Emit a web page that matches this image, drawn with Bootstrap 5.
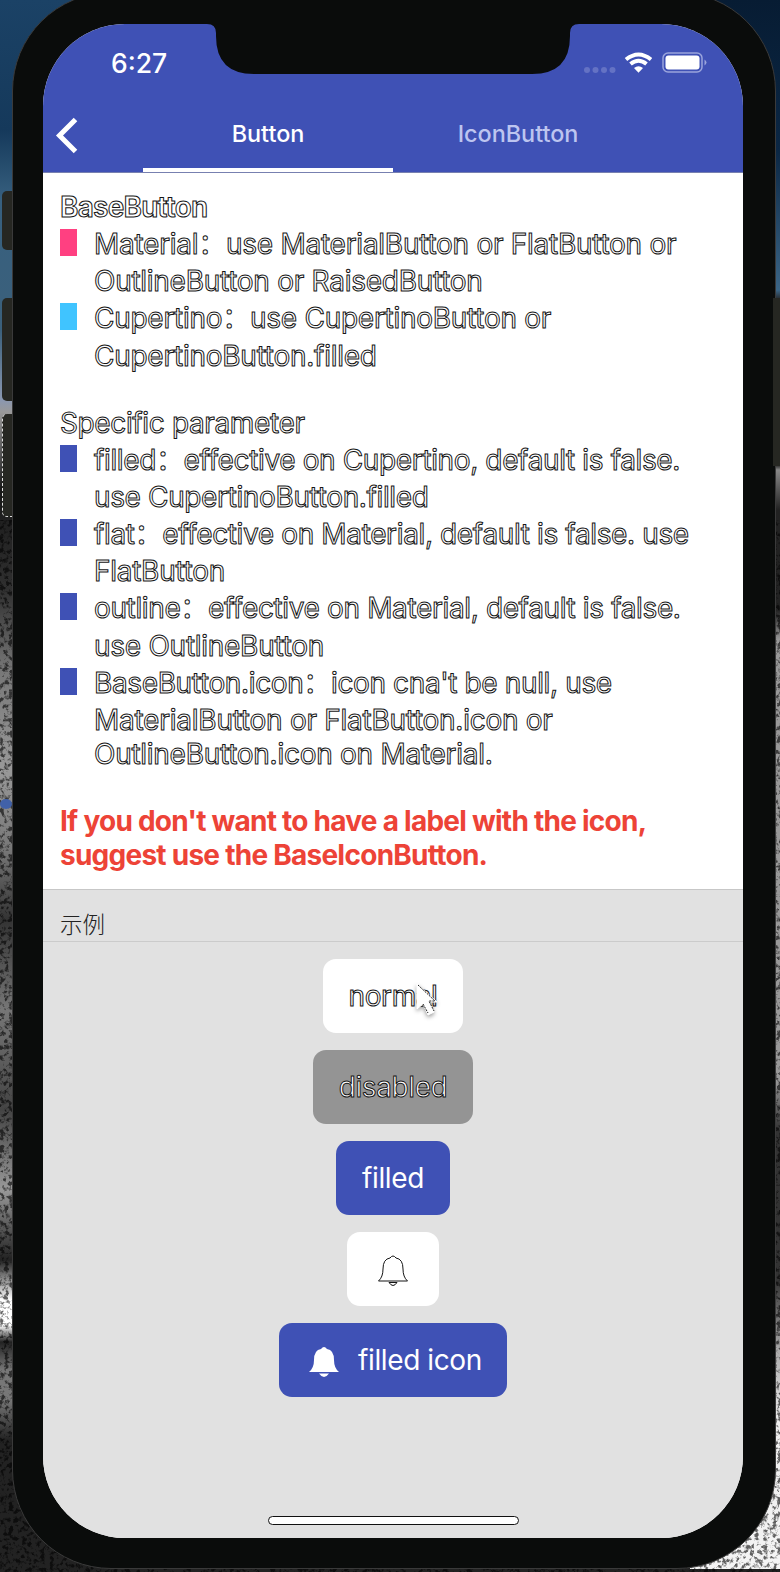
<!DOCTYPE html>
<html lang="en">
<head>
<meta charset="utf-8">
<meta name="viewport" content="width=device-width, initial-scale=1">
<title>BaseButton</title>
<link href="https://cdn.jsdelivr.net/npm/bootstrap@5.3.0/dist/css/bootstrap.min.css" rel="stylesheet">
<style>
:root{--indigo:#3f51b5}
body{margin:0;font-family:Inter,"Liberation Sans","Noto Sans CJK SC",sans-serif;background:#222}
.desktop{width:780px;height:1572px;background:linear-gradient(180deg,#1b4266 0,#15395b 130px,#37607f 200px,#3b607b 330px,#8a97b0 400px,#999 412px,#191919 490px,#303030 590px,#777 670px,#999 770px,#777 850px,#333 920px,#777 1010px,#444 1110px,#999 1190px,#222 1260px,#fff 1300px,#fff 1325px,#222 1342px,#777 1370px,#777 1400px,#222 1440px,#222 100%)}
.desktop-right{right:0;top:0;width:90px;height:1569px;background:linear-gradient(180deg,#071c33 0,#0b2744 150px,#3b6586 290px,#242424 300px,#242424 465px,#888 470px,#222 510px,#222 610px,#999 640px,#999 1080px,#333 1130px,#333 1280px,#aaa 1350px,#eee 1420px,#f4f4f4 100%)}
.grain{left:0;top:0}
.side-key{left:2px;width:16px;background:#262722;border-radius:5px 0 0 5px}
.key-a{top:191px;height:59px}.key-b{top:298px;height:103px}
.key-c{top:414px;height:103px;border:1px dashed #ddd;border-top:0}
.key-d{left:773px;top:298px;width:7px;height:168px;border-radius:0}
.phone{width:764px;height:1577px;margin-left:12px;top:-8px;border-radius:99px;background:#0a0c0b;border:1px solid #3a3a3a;padding:31px 32px 31px 30px}
.screen{width:700px;height:1514px;border-radius:82px;background:#fff;overflow:hidden}
.app-head{height:149px;background:var(--indigo);border-bottom:1px solid #7780b0}
.notch{left:164px;top:0}
.status{height:78px;padding:0 36px 0 68px}
.clock{font-size:26.500px;font-weight:500;color:#fff;line-height:78px}
.tabs{height:70px}
.back{width:100px;padding:15px 0 0 12px}
.tab{width:250px;height:70px;font-size:23.400px;font-weight:500;line-height:64px;text-align:center;color:#bdc5f0}
.tab.on{color:#fff;border-bottom:4px solid #fff}
.info{height:716px;padding:16px 17px 0;font-size:28px;white-space:nowrap}
.txt{display:block;height:37.15px;line-height:37px;letter-spacing:-.27px}
.txt.tight{letter-spacing:-.37px}
.txt.heading{font-weight:600;letter-spacing:-.75px}
.trace{color:#fff;-webkit-text-stroke:1px #151515}
.entry{gap:17px}
.sq{width:17px;height:27px;flex:none;margin-top:3px;background:var(--indigo)}
.warn{color:#ed4337;font-weight:700;line-height:34px;margin-top:31px;letter-spacing:-.75px}
.demo{height:649px;background:#e1e1e1;border-top:1px solid #c7c7c7}
.demo-title{height:52px;padding:13px 17px 0;font-size:22.500px;line-height:40px;border-bottom:1px solid #cbcbcb;font-family:"Noto Sans CJK SC",sans-serif;color:#222;font-weight:300}
.stack{gap:17px;padding-top:17px}
.key-btn{--bs-btn-padding-x:0;--bs-btn-padding-y:0;--bs-btn-border-width:0;--bs-btn-border-radius:13px;height:74px;font-size:28px;letter-spacing:-.4px;background:#fff;color:#fff;display:flex;align-items:center;justify-content:center}
.key-btn.fill{background:var(--indigo)}
.key-btn.off{background:#949494;opacity:1}
.bell{position:relative;top:2px}
.home{width:251px;height:9px;border-radius:5px;background:#fff;border:1px solid #111;left:225px;bottom:13px}
.pointer{left:372px;top:958px;filter:drop-shadow(0 2px 2px #0006)}
</style>
</head>
<body>
<div class="desktop position-relative overflow-hidden">
<div class="desktop-right position-absolute"></div>
<svg class="grain position-absolute" width="780" height="1572">
<filter id="rock" x="0" y="0" width="100%" height="100%"><feTurbulence type="fractalNoise" baseFrequency=".22" numOctaves="3" seed="4"/><feColorMatrix values="0 0 0 0 0  0 0 0 0 0  0 0 0 0 0  5 0 0 0 -2.400"/></filter>
<rect y="520" width="780" height="1052" filter="url(#rock)" opacity=".6"/>
<ellipse cx="6" cy="804" rx="6" ry="5" fill="#4161a8"/>
</svg>
<div class="side-key key-a position-absolute"></div><div class="side-key key-b position-absolute"></div><div class="side-key key-c position-absolute"></div>
<main class="phone position-relative">
<div class="screen position-relative">
<header class="app-head">
<div class="status d-flex justify-content-between align-items-center">
<span class="clock">6:27</span>
<svg width="124" height="26" viewBox="0 0 124 26" fill="none">
<g fill="#6472c4"><circle cx="4" cy="20" r="3"/><circle cx="12.500" cy="20" r="3"/><circle cx="21" cy="20" r="3"/><circle cx="29.500" cy="20" r="3"/></g>
<g stroke="#fff" stroke-width="4"><path d="M43 9.500Q55.500-.5 68 9.500"/><path d="M47.500 14Q55.500 7.500 63.500 14"/></g><path fill="#fff" d="m51 18 4.500 4.800L60 18q-4.500-3.600-9 0z"/>
<rect x="80" y="3" width="39" height="19" rx="5" stroke="#9aa4dc" stroke-width="1.500"/><rect x="82.500" y="5.500" width="34" height="14" rx="3" fill="#fff"/><path d="M121.500 9.500q4 3 0 6z" fill="#9aa4dc"/>
</svg>
</div>
<nav class="tabs d-flex">
<div class="back"><svg class="d-block" width="24" height="38" viewBox="0 0 24 38"><path d="M20.500 2.500 4.500 18.500l16 16" fill="none" stroke="#fff" stroke-width="5"/></svg></div>
<div class="tab on">Button</div><div class="tab">IconButton</div>
</nav>
</header>
<svg class="notch position-absolute" width="372" height="51" viewBox="0 0 372 51"><path d="M0 0h372q-9 0-9 9v3q0 38-38 38H47Q9 50 9 12V9q0-9-9-9z" fill="#0a0c0b"/></svg>
<section class="info">
<span class="txt trace heading">BaseButton</span>
<div class="entry d-flex"><i class="sq" style="background:#ff4081"></i><div class="trace"><span class="txt">Material：use MaterialButton or FlatButton or</span><span class="txt">OutlineButton or RaisedButton</span></div></div>
<div class="entry d-flex"><i class="sq" style="background:#40c4ff"></i><div class="trace"><span class="txt">Cupertino：use CupertinoButton or</span><span class="txt">CupertinoButton.filled</span></div></div>
<span class="txt tight trace" style="margin-top:30px">Specific parameter</span>
<div class="entry d-flex"><i class="sq"></i><div class="trace"><span class="txt tight">filled：effective on Cupertino, default is false.</span><span class="txt tight">use CupertinoButton.filled</span></div></div>
<div class="entry d-flex"><i class="sq"></i><div class="trace"><span class="txt tight">flat：effective on Material, default is false. use</span><span class="txt">FlatButton</span></div></div>
<div class="entry d-flex"><i class="sq"></i><div class="trace"><span class="txt tight">outline：effective on Material, default is false.</span><span class="txt">use OutlineButton</span></div></div>
<div class="entry d-flex"><i class="sq"></i><div class="trace"><span class="txt tight">BaseButton.icon：icon cna't be null, use</span><span class="txt" style="height:34px">MaterialButton or FlatButton.icon or</span><span class="txt">OutlineButton.icon on Material.</span></div></div>
<div class="warn">If you don't want to have a label with the icon,<br>suggest use the BaseIconButton.</div>
</section>
<section class="demo">
<div class="demo-title">示例</div>
<div class="stack d-flex flex-column align-items-center">
<button class="btn key-btn trace" style="width:140px">normal</button>
<button class="btn key-btn off trace" style="width:160px">disabled</button>
<button class="btn key-btn fill" style="width:114px">filled</button>
<button class="btn key-btn" style="width:92px" aria-label="bell"><svg class="bell" width="32" height="34" viewBox="0 0 32 34" fill="#fff" stroke="#151515"><path d="M1.500 27Q6 23 6 15 6 5 13 4q3-4 6 0 7 1 7 11 0 8 4.500 12z"/><path d="M12 28.500q4 6 8 0z"/></svg></button>
<button class="btn key-btn fill" style="width:228px;padding-left:4px"><svg width="32" height="34" viewBox="0 0 32 34" fill="#fff" class="bell" style="margin-right:18px"><path d="M1 27Q6 23 6 15 6 5 13 4q3-4 6 0 7 1 7 11 0 8 5 12z"/><path d="M11 28.500q5 7 10 0z"/></svg>filled icon</button>
</div>
</section>
<svg class="pointer position-absolute" width="24" height="36" viewBox="0 0 24 36"><path d="M2 2v25l6-5 5 11 6-3-5-10h8z" fill="#fff" stroke="#fff"/><path d="M3 3 20 19h-6l5 10M8 22l5 9" stroke="#222" fill="none" stroke-dasharray="2 1"/></svg>
<div class="home position-absolute"></div>
</div>
</main>
<div class="side-key key-d position-absolute"></div>
</div>
<script src="https://cdn.jsdelivr.net/npm/bootstrap@5.3.0/dist/js/bootstrap.bundle.min.js"></script>
</body>
</html>
